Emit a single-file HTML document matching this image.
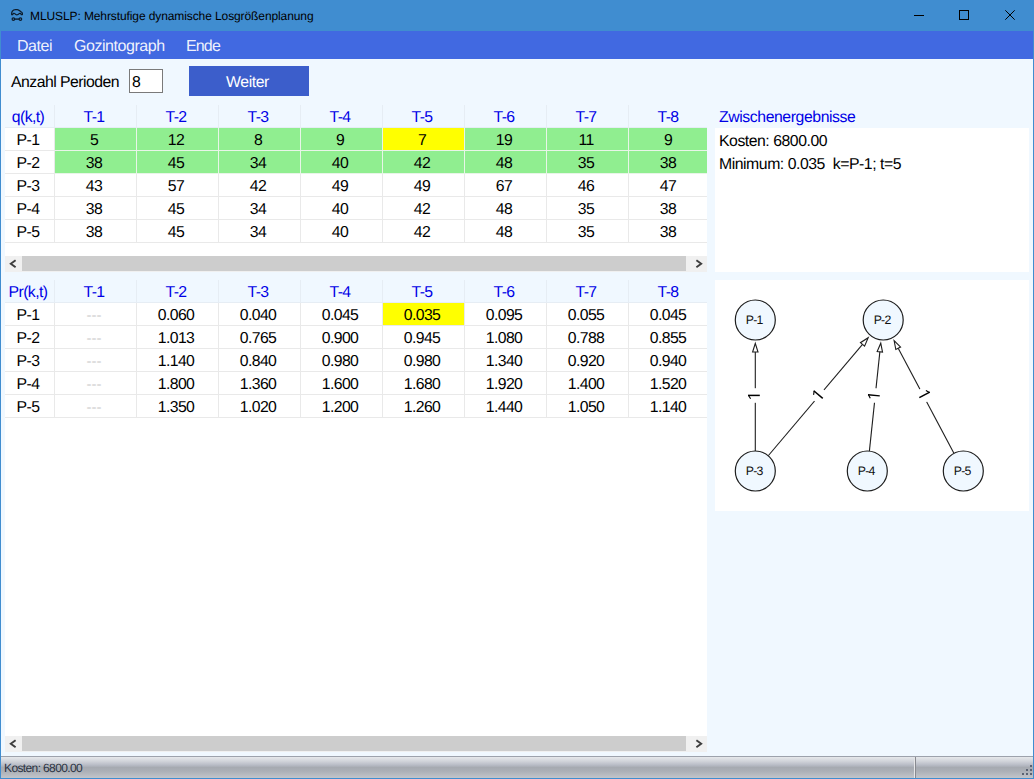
<!DOCTYPE html>
<html><head><meta charset="utf-8"><title>MLUSLP</title>
<style>
*{box-sizing:border-box;margin:0;padding:0}
html,body{width:1034px;height:779px;overflow:hidden;background:#f0f8ff;font-family:"Liberation Sans",sans-serif;font-size:15px;color:#000;text-rendering:geometricPrecision}
.abs{position:absolute}
#win{position:absolute;left:0;top:0;width:1034px;height:779px;background:#f0f8ff;overflow:hidden}
#title{position:absolute;left:0;top:0;width:1034px;height:31px;background:#408dd0}
#title .t{position:absolute;left:30px;top:9px;font-size:12px;line-height:15px;color:#000;white-space:nowrap;letter-spacing:-0.1px}
#menu{position:absolute;left:1px;top:31px;width:1032px;height:28px;background:#4169e1;color:rgba(255,255,255,.93)}
#menu span{position:absolute;top:7px;font-size:16px;line-height:18px;white-space:nowrap;letter-spacing:-0.45px}
.lbl{position:absolute;white-space:nowrap;line-height:18px}
#tb{position:absolute;left:129px;top:69px;width:34px;height:24px;background:#fff;border:1px solid #7a7a7a}
#tb span{position:absolute;left:2px;top:4px;line-height:18px;font-size:15.8px}
#btn{position:absolute;left:189px;top:66px;width:120px;height:30px;background:#3c5ecb;color:#fff;text-align:center;line-height:34px;padding-right:3px;font-size:15.8px;letter-spacing:-0.4px}
.grid{position:absolute;background:#fff;overflow:hidden}
.grid-in{position:absolute;left:0;top:0}
.row{display:flex;height:23px}
.c{width:82px;height:23px;line-height:22px;padding-top:2px;padding-right:3px;text-align:center;border-right:1px solid #e9e9e9;border-bottom:1px solid #e9e9e9;background:#fff;white-space:nowrap;overflow:hidden;font-size:15.8px;letter-spacing:-0.6px}
.c0{width:50px;padding-right:3px}
.hdr .c{background:#f0f8ff;color:#0000e6;border-right-color:#e6edf4;border-bottom-color:#e6edf4}
.g{background:#90ee90;border-right-color:#e8f5e8;border-bottom-color:#e8f5e8}
.y{background:#ffff00}
.dash{color:#cfcfcf;letter-spacing:0;font-size:15px}
.sb{position:absolute;left:0;height:16px;background:#f0f0f0}
.sb .th{position:absolute;left:17px;top:0;height:15px;background:#cdcdcd}
.sb svg{position:absolute;top:0}
.blue{color:#0000e6}
#status{position:absolute;left:1px;top:756px;width:1032px;height:22px;background:linear-gradient(to bottom,#9da2ac 0,#9da2ac 1px,#e6e8eb 1px,#d2d5db 5px,#b8bcc6 9px,#a6aab1 11.5px,#abafb6 15px,#c2c5ca 22px);font-size:12px;color:#2a3242}

.bd{position:absolute;background:#408dd0}

</style></head>
<body>
<div id="win">
<div id="title">
  <svg class="abs" style="left:11px;top:9px" width="12" height="12" viewBox="0 0 12 12"><g fill="none" stroke="#0c1c2c" stroke-width="1.2" stroke-linejoin="round"><path d="M0.7 5.6 C0.4 3 1.6 0.7 4.5 0.6 L6.3 0.6 C8 0.7 9 2 10.4 3 C11.4 3.6 11.6 4.6 11.4 5.6 L10.2 5.6 C10.1 4.2 8.6 4.1 8.2 4.6 C7.5 5.5 6.8 5.8 5.8 5.8 C4.8 5.8 4.3 5.3 3.8 4.6 C3.3 4 1.9 4.2 1.7 5.6 Z"/><circle cx="2.4" cy="10.1" r="1.3"/><circle cx="9.4" cy="10.1" r="1.3"/><path d="M3.7 10.1 L8.1 10.1" stroke-width="1.4"/></g></svg>
  <div class="t">MLUSLP: Mehrstufige dynamische Losgrößenplanung</div>
  <svg class="abs" style="left:896px;top:0" width="138" height="31" viewBox="0 0 138 31"><g fill="none" stroke="#000" stroke-width="1"><path d="M18 15.5 H28"/><rect x="63.5" y="10.5" width="9" height="9"/><path d="M109.3 10.3 L118.7 19.7 M118.7 10.3 L109.3 19.7"/></g></svg>
</div>
<div id="menu"><span style="left:16px">Datei</span><span style="left:73px">Gozintograph</span><span style="left:185px;letter-spacing:-0.85px">Ende</span></div>

<div class="lbl" style="left:11px;top:74px;font-size:15.8px;letter-spacing:-0.53px">Anzahl Perioden</div>
<div id="tb"><span>8</span></div>
<div id="btn">Weiter</div>

<div class="grid" id="g1" style="left:5px;top:105px;width:702px;height:167px"><div class="grid-in"><div class="row hdr"><div class="c c0">q(k,t)</div><div class="c">T-1</div><div class="c">T-2</div><div class="c">T-3</div><div class="c">T-4</div><div class="c">T-5</div><div class="c">T-6</div><div class="c">T-7</div><div class="c">T-8</div></div><div class="row"><div class="c c0 rh">P-1</div><div class="c g">5</div><div class="c g">12</div><div class="c g">8</div><div class="c g">9</div><div class="c g y">7</div><div class="c g">19</div><div class="c g">11</div><div class="c g">9</div></div><div class="row"><div class="c c0 rh">P-2</div><div class="c g">38</div><div class="c g">45</div><div class="c g">34</div><div class="c g">40</div><div class="c g">42</div><div class="c g">48</div><div class="c g">35</div><div class="c g">38</div></div><div class="row"><div class="c c0 rh">P-3</div><div class="c">43</div><div class="c">57</div><div class="c">42</div><div class="c">49</div><div class="c">49</div><div class="c">67</div><div class="c">46</div><div class="c">47</div></div><div class="row"><div class="c c0 rh">P-4</div><div class="c">38</div><div class="c">45</div><div class="c">34</div><div class="c">40</div><div class="c">42</div><div class="c">48</div><div class="c">35</div><div class="c">38</div></div><div class="row"><div class="c c0 rh">P-5</div><div class="c">38</div><div class="c">45</div><div class="c">34</div><div class="c">40</div><div class="c">42</div><div class="c">48</div><div class="c">35</div><div class="c">38</div></div></div>
  <div class="sb" style="top:151px;width:702px"><div class="th" style="width:664px"></div>
  <svg style="left:0" width="17" height="16"><path d="M10.6 4.2 L5.8 7.7 L10.6 11.2" fill="none" stroke="#3d3d3d" stroke-width="1.9"/></svg>
  <svg style="left:685px" width="17" height="16"><path d="M6.4 4.2 L11.2 7.7 L6.4 11.2" fill="none" stroke="#3d3d3d" stroke-width="1.9"/></svg></div>
</div>

<div class="grid" id="g2" style="left:5px;top:280px;width:702px;height:472px"><div class="grid-in"><div class="row hdr"><div class="c c0">Pr(k,t)</div><div class="c">T-1</div><div class="c">T-2</div><div class="c">T-3</div><div class="c">T-4</div><div class="c">T-5</div><div class="c">T-6</div><div class="c">T-7</div><div class="c">T-8</div></div><div class="row"><div class="c c0 rh">P-1</div><div class="c dash">---</div><div class="c">0.060</div><div class="c">0.040</div><div class="c">0.045</div><div class="c y">0.035</div><div class="c">0.095</div><div class="c">0.055</div><div class="c">0.045</div></div><div class="row"><div class="c c0 rh">P-2</div><div class="c dash">---</div><div class="c">1.013</div><div class="c">0.765</div><div class="c">0.900</div><div class="c">0.945</div><div class="c">1.080</div><div class="c">0.788</div><div class="c">0.855</div></div><div class="row"><div class="c c0 rh">P-3</div><div class="c dash">---</div><div class="c">1.140</div><div class="c">0.840</div><div class="c">0.980</div><div class="c">0.980</div><div class="c">1.340</div><div class="c">0.920</div><div class="c">0.940</div></div><div class="row"><div class="c c0 rh">P-4</div><div class="c dash">---</div><div class="c">1.800</div><div class="c">1.360</div><div class="c">1.600</div><div class="c">1.680</div><div class="c">1.920</div><div class="c">1.400</div><div class="c">1.520</div></div><div class="row"><div class="c c0 rh">P-5</div><div class="c dash">---</div><div class="c">1.350</div><div class="c">1.020</div><div class="c">1.200</div><div class="c">1.260</div><div class="c">1.440</div><div class="c">1.050</div><div class="c">1.140</div></div></div>
  <div class="sb" style="top:456px;width:702px"><div class="th" style="width:664px"></div>
  <svg style="left:0" width="17" height="16"><path d="M10.6 4.2 L5.8 7.7 L10.6 11.2" fill="none" stroke="#3d3d3d" stroke-width="1.9"/></svg>
  <svg style="left:685px" width="17" height="16"><path d="M6.4 4.2 L11.2 7.7 L6.4 11.2" fill="none" stroke="#3d3d3d" stroke-width="1.9"/></svg></div>
</div>

<div class="lbl blue" style="left:719px;top:109px;font-size:15.8px;letter-spacing:-0.42px">Zwischenergebnisse</div>
<div class="abs" style="left:715px;top:128px;width:314px;height:144px;background:#fff">
  <div class="lbl" style="left:4px;top:5px;font-size:15.8px;letter-spacing:-0.47px">Kosten: 6800.00</div>
  <div class="lbl" style="left:4px;top:28px;white-space:pre;font-size:15.8px;letter-spacing:-0.46px">Minimum: 0.035  k=P-1; t=5</div>
</div>
<div class="abs" id="graph" style="left:715px;top:280px;width:314px;height:231px;background:#fff">
<svg width="314" height="231" viewBox="0 0 314 231" style="position:absolute;left:0;top:0">
<g stroke="#1e1e1e" stroke-width="1.1" fill="none"><line x1="40.30" y1="171.00" x2="40.30" y2="72.00"/><line x1="53.23" y1="175.74" x2="147.52" y2="64.42"/><line x1="154.39" y1="171.11" x2="164.85" y2="71.82"/><line x1="238.93" y1="173.33" x2="183.20" y2="68.27"/></g>
<g stroke="#1e1e1e" stroke-width="1.1" fill="#fff" stroke-linejoin="miter"><path d="M40.30 63.30 L43.00 72.00 L37.60 72.00 Z"/><path d="M153.14 57.78 L149.58 66.16 L145.46 62.67 Z"/><path d="M165.76 63.17 L167.53 72.11 L162.16 71.54 Z"/><path d="M179.12 60.58 L185.58 67.00 L180.81 69.53 Z"/></g>
<g font-family="Liberation Sans, sans-serif" font-size="15" fill="#000"><g transform="translate(40.30 115.50) rotate(-90.00)"><rect x="-7.3" y="-3" width="14.6" height="6" fill="#fff"/><path d="M0.1 4.5 V-7.3" fill="none" stroke="#000" stroke-width="1.5"/><path d="M0.3 -6.9 L-3.2 -4.7" fill="none" stroke="#000" stroke-width="1.1"/></g><g transform="translate(104.25 115.50) rotate(-49.73)"><rect x="-7.3" y="-3" width="14.6" height="6" fill="#fff"/><path d="M0.1 4.5 V-7.3" fill="none" stroke="#000" stroke-width="1.5"/><path d="M0.3 -6.9 L-3.2 -4.7" fill="none" stroke="#000" stroke-width="1.1"/></g><g transform="translate(160.25 115.50) rotate(-83.99)"><rect x="-7.3" y="-3" width="14.6" height="6" fill="#fff"/><path d="M0.1 4.5 V-7.3" fill="none" stroke="#000" stroke-width="1.5"/><path d="M0.3 -6.9 L-3.2 -4.7" fill="none" stroke="#000" stroke-width="1.1"/></g><g transform="translate(208.25 115.50) rotate(62.06)"><rect x="-7.3" y="-3" width="14.6" height="6" fill="#fff"/><path d="M0.1 4.5 V-7.3" fill="none" stroke="#000" stroke-width="1.5"/><path d="M0.3 -6.9 L-3.2 -4.7" fill="none" stroke="#000" stroke-width="1.1"/></g></g>
<g stroke="#1e1e1e" stroke-width="1.2" fill="#f0f8ff"><circle cx="40.3" cy="40.0" r="20"/><circle cx="168.2" cy="40.0" r="20"/><circle cx="40.3" cy="191.0" r="20"/><circle cx="152.3" cy="191.0" r="20"/><circle cx="248.3" cy="191.0" r="20"/></g>
<g font-family="Liberation Sans, sans-serif" font-size="12.3" letter-spacing="-0.8" text-anchor="middle" fill="#111"><text x="39.2" y="44.1">P-1</text><text x="167.1" y="44.1">P-2</text><text x="39.2" y="195.1">P-3</text><text x="151.2" y="195.1">P-4</text><text x="247.2" y="195.1">P-5</text></g>
</svg>
</div>

<div class="bd" style="left:0;top:31px;width:1px;height:748px"></div><div class="bd" style="left:1033px;top:31px;width:1px;height:748px"></div><div class="bd" style="left:0;top:778px;width:1034px;height:1px"></div>
<div id="status"><div class="abs" style="left:3px;top:5px;line-height:14px;letter-spacing:-0.62px;white-space:nowrap">Kosten: 6800.00</div>
<div class="abs" style="left:913px;top:1px;width:1px;height:21px;background:#e6e6e8"></div><div class="abs" style="left:914px;top:1px;width:1px;height:21px;background:#888a90"></div>
<svg class="abs" style="left:1020px;top:8px" width="12" height="13" viewBox="0 0 12 13"><g fill="#5b6272"><rect x="9" y="1" width="2" height="2"/><rect x="5" y="5" width="2" height="2"/><rect x="9" y="5" width="2" height="2"/><rect x="1" y="9" width="2" height="2"/><rect x="5" y="9" width="2" height="2"/><rect x="9" y="9" width="2" height="2"/></g></svg>
</div>
</div>

</body></html>
